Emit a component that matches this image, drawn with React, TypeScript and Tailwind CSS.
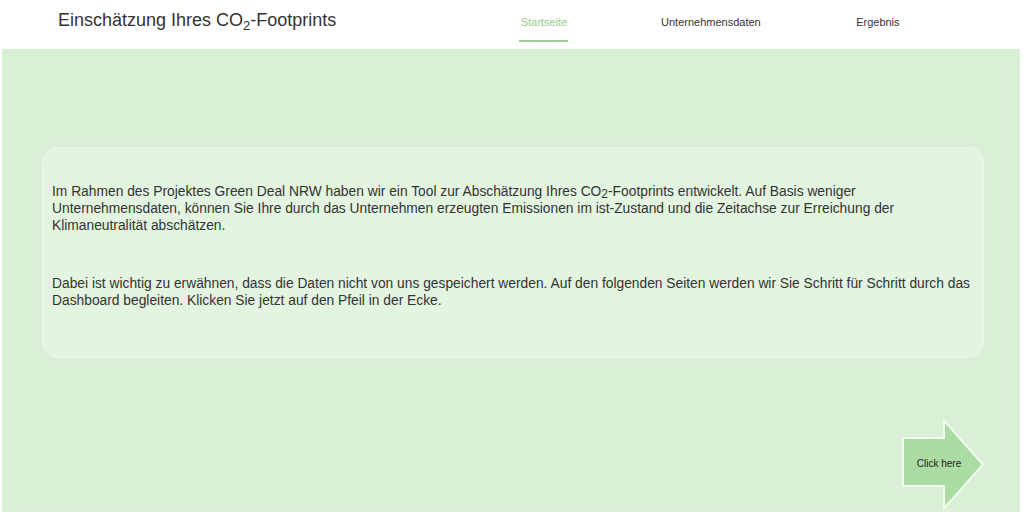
import React from 'react';

const navItems = ['Startseite', 'Unternehmensdaten', 'Ergebnis'];

export default function App() {
  const font = { fontFamily: '"Liberation Sans", Arial, sans-serif' };

  return (
    <div className="w-[1024px] h-[515px] bg-white overflow-hidden" style={font}>
      {/* Kopfzeile */}
      <header className="h-[49px] flex items-start">
        <h1 className="ml-[58px] mt-[9px] text-[18px] leading-[22px] text-[#333]">
          Einschätzung Ihres CO<span className="text-[13px] leading-none relative top-[4px]">2</span>-Footprints
        </h1>
        <nav className="ml-[124px] flex">
          {navItems.map((item, i) => (
            <div key={item} className="w-[167px] flex justify-center">
              <div className="pt-[16px] flex flex-col items-center">
                <span
                  className={
                    i === 0
                      ? 'text-[11px] leading-[13px] text-[#8fd08a]'
                      : 'text-[11px] leading-[13px] text-[#333]'
                  }
                >
                  {item}
                </span>
                {i === 0 && <div className="mt-[11px] h-[2px] w-[49px] bg-[#9bcf94]" />}
              </div>
            </div>
          ))}
        </nav>
      </header>

      {/* Inhalt */}
      <main className="ml-[2px] w-[1018px] h-[463px] bg-[#daf0d6] flex flex-col pl-[40px] pr-[36px] pt-[98px]">
        <div className="h-[211px] rounded-[16px] bg-[#e3f4e0] border border-[#eef8ec] pl-[9px] pr-[2px] pt-[35px] text-[13.8px] leading-[17px] text-[#333]">
          <p>
            Im Rahmen des Projektes Green Deal NRW haben wir ein Tool zur Abschätzung Ihres CO<span className="text-[12px] leading-none relative top-[2px]">2</span>-Footprints entwickelt. Auf Basis weniger
            Unternehmensdaten, können Sie Ihre durch das Unternehmen erzeugten Emissionen im ist-Zustand und die Zeitachse zur Erreichung der Klimaneutralität abschätzen.
          </p>
          <p className="mt-[41px]">
            Dabei ist wichtig zu erwähnen, dass die Daten nicht von uns gespeichert werden. Auf den folgenden Seiten werden wir Sie Schritt für Schritt durch das Dashboard begleiten. Klicken Sie jetzt auf den Pfeil in der Ecke.
          </p>
        </div>

        <div className="mt-auto flex justify-end mr-[-1px] mb-[2px]">
          <button className="cursor-pointer">
            <svg width="83" height="91" viewBox="0 0 83 91">
              <polygon
                points="1,19 42,19 42,1.5 81,45.5 42,89.5 42,67 1,67"
                fill="#abdca3"
                stroke="#f4fbf2"
                strokeWidth="2"
              />
              <text x="37" y="48" textAnchor="middle" fontSize="10" fill="#222" style={font}>
                Click here
              </text>
            </svg>
          </button>
        </div>
      </main>
    </div>
  );
}
